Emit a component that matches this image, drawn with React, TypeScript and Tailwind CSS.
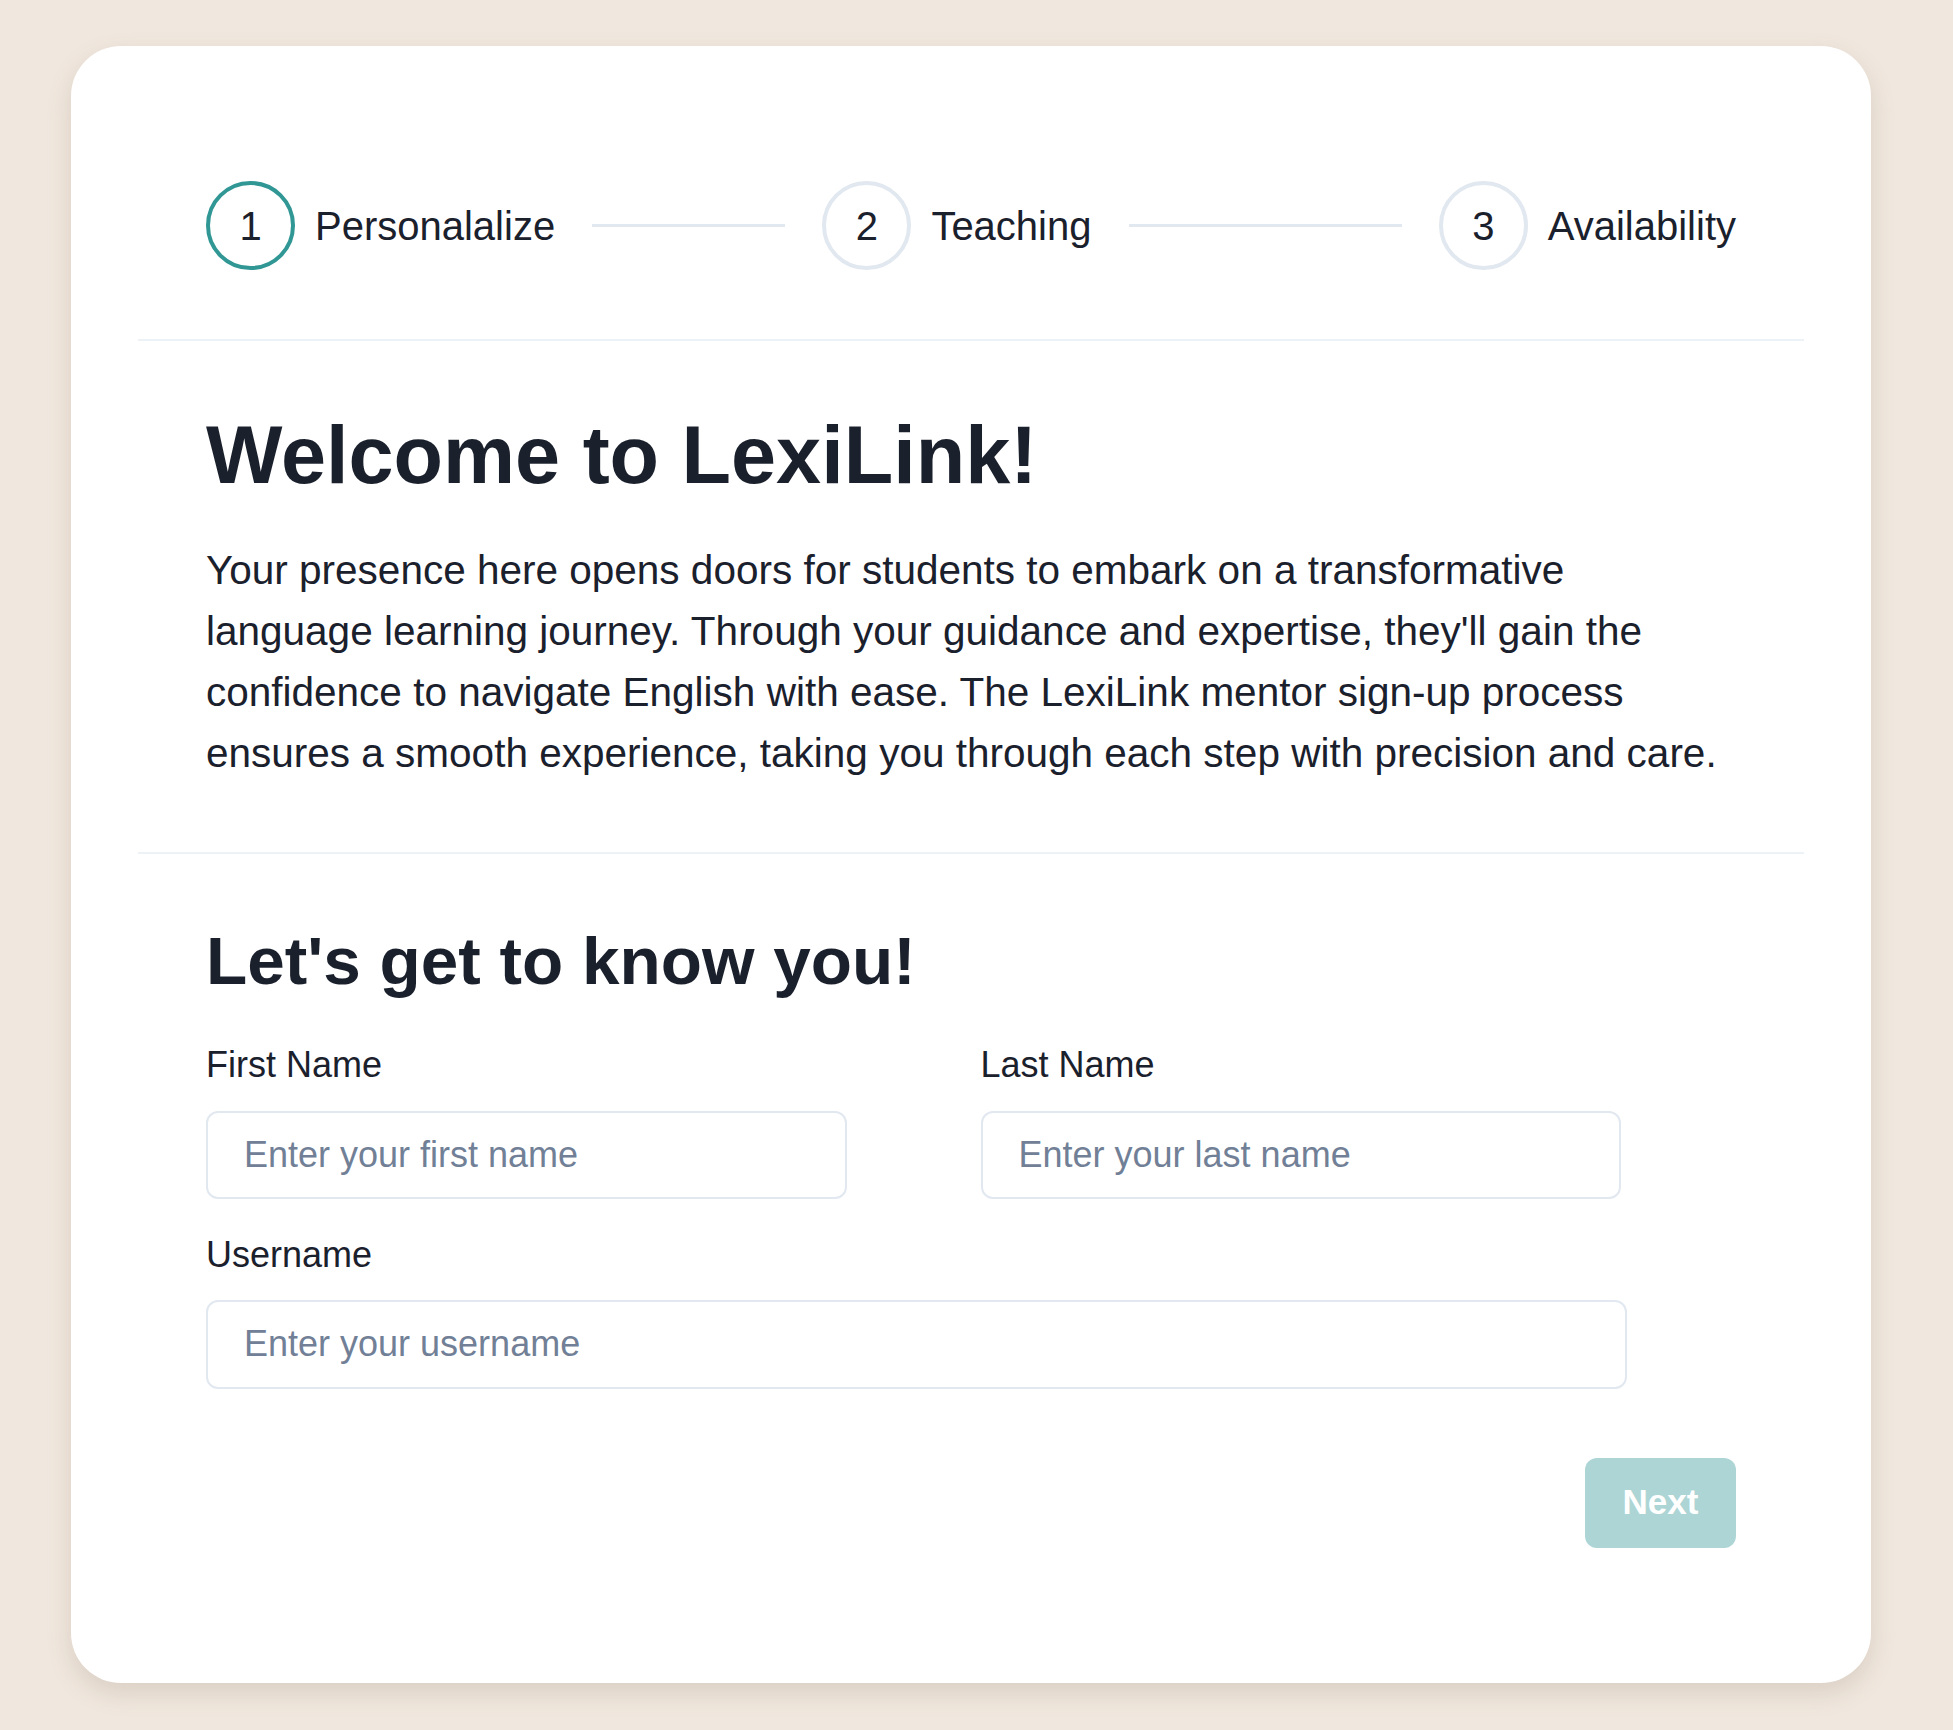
import React from "react";

const font = { fontFamily: '"Liberation Sans", Arial, sans-serif' };

function Step({ n, label, active, last }: { n: number; label: string; active?: boolean; last?: boolean }) {
  return (
    <div className={last ? "flex flex-none items-center" : "flex flex-1 items-center"}>
      <div
        className={
          active
            ? "flex h-[89px] w-[89px] flex-none items-center justify-center rounded-full border-[4px] border-[#319795] text-[40px] leading-none text-[#1a202c]"
            : "flex h-[89px] w-[89px] flex-none items-center justify-center rounded-full border-[4px] border-[#e2e8f0] text-[40px] leading-none text-[#1a202c]"
        }
      >
        {n}
      </div>
      <div className="ml-[20px] whitespace-nowrap text-[40px] leading-none text-[#1a202c]">{label}</div>
      {!last && <div className="mx-[37px] h-[3px] flex-1 bg-[#e2e8f0]" />}
    </div>
  );
}

export default function App() {
  return (
    <div className="h-[1730px] w-full bg-[#f0e7de] pl-[71px] pt-[46px]" style={font}>
      <div className="w-[1800px] rounded-[50px] bg-white px-[67px] pb-[135px] pt-[135px] shadow-[0_10px_24px_rgba(120,100,80,0.18)]">
        <div className="flex h-[89px] items-center px-[68px]">
          <Step n={1} label="Personalalize" active />
          <Step n={2} label="Teaching" />
          <Step n={3} label="Availability" last />
        </div>

        <div className="mt-[69px] h-[2px] bg-[#edf2f7]" />

        <div className="px-[68px]">
          <h1 className="mt-[74px] text-[81px] font-bold leading-none text-[#1a202c]">Welcome to LexiLink!</h1>
          <p className="mt-[44px] text-[40.5px] leading-[61px] text-[#1a202c]">
            Your presence here opens doors for students to embark on a transformative language learning journey.
            Through your guidance and expertise, they'll gain the confidence to navigate English with ease. The
            LexiLink mentor sign-up process ensures a smooth experience, taking you through each step with precision
            and care.
          </p>
        </div>

        <div className="mt-[68px] h-[2px] bg-[#edf2f7]" />

        <div className="px-[68px]">
          <h2 className="mt-[73px] text-[67.5px] font-bold leading-none text-[#1a202c]">Let's get to know you!</h2>

          <div className="mt-[52px] grid w-[1415px] grid-cols-2 gap-x-[134px]">
            <div className="flex flex-col">
              <label className="text-[36px] leading-none text-[#1a202c]">First Name</label>
              <input
                className="mt-[28px] h-[88px] rounded-[12px] border-2 border-[#e2e8f0] bg-white pl-[36px] text-[36px] text-[#1a202c] outline-none placeholder:text-[#718096]"
                placeholder="Enter your first name"
                style={font}
              />
            </div>
            <div className="flex flex-col">
              <label className="text-[36px] leading-none text-[#1a202c]">Last Name</label>
              <input
                className="mt-[28px] h-[88px] rounded-[12px] border-2 border-[#e2e8f0] bg-white pl-[36px] text-[36px] text-[#1a202c] outline-none placeholder:text-[#718096]"
                placeholder="Enter your last name"
                style={font}
              />
            </div>
          </div>

          <div className="mt-[38px] flex w-[1421px] flex-col">
            <label className="text-[36px] leading-none text-[#1a202c]">Username</label>
            <input
              className="mt-[27px] h-[89px] rounded-[12px] border-2 border-[#e2e8f0] bg-white pl-[36px] text-[36px] text-[#1a202c] outline-none placeholder:text-[#718096]"
              placeholder="Enter your username"
              style={font}
            />
          </div>

          <div className="mt-[69px] flex justify-end">
            <button
              className="h-[90px] w-[151px] rounded-[12px] bg-[#add5d5] text-[35px] font-bold text-white"
              style={font}
            >
              Next
            </button>
          </div>
        </div>
      </div>
    </div>
  );
}
